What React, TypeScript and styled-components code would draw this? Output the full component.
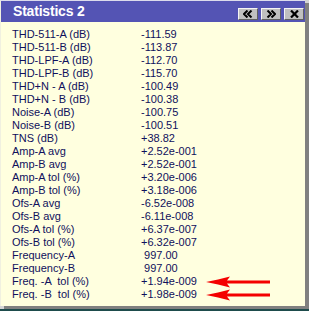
import styled, { createGlobalStyle } from "styled-components"

const GlobalStyle = createGlobalStyle`
  html, body {
    margin: 0;
    padding: 0;
    background: #1e4c4c;
  }
`

const Desktop = styled.div`
  width: 309px;
  height: 309px;
  background: #d4d4d4;
`

const Window = styled.div`
  width: 305px;
  height: 306px;
  box-sizing: border-box;
  border-top: 1px solid #dcdcec;
  border-left: 1px solid #f0f0e0;
  background: #ffffdf;
  box-shadow: 4px 3px 0 #808080;
  display: flex;
  flex-direction: column;
  font-family: "Liberation Sans", Arial, sans-serif;
`

const TitleBar = styled.div`
  height: 21px;
  background: #5454b4;
  display: flex;
  align-items: flex-end;
  padding: 0 1px 2px 12px;
  box-sizing: border-box;
`

const Title = styled.div`
  flex: 1;
  align-self: center;
  color: #fff;
  font-weight: bold;
  font-size: 14px;
  letter-spacing: -0.2px;
  margin-top: 1px;
`

const Buttons = styled.div`
  display: flex;
  gap: 3px;
`

const TitleButton = styled.button`
  width: 20px;
  height: 12px;
  padding: 0;
  margin: 0;
  background: #c0c0c0;
  border: 1px solid;
  border-color: #f4f4f4 #606060 #606060 #f4f4f4;
  display: flex;
  align-items: center;
  justify-content: center;
`

const Body = styled.div`
  padding: 6px 0 0 11px;
  color: #10105c;
  font-size: 11px;
  line-height: 13px;
`

const Row = styled.div`
  display: grid;
  grid-template-columns: 129px 65px 66px;
  height: 13px;
  align-items: center;
`

const Value = styled.span`
  white-space: pre;
`

const LeftIcon = () => (
  <svg width="10" height="8" viewBox="0 0 10 8">
    <path d="M4.5 0.5 L1 4 L4.5 7.5 M8.5 0.5 L5 4 L8.5 7.5" fill="none" stroke="#000" strokeWidth="2" />
  </svg>
)

const RightIcon = () => (
  <svg width="10" height="8" viewBox="0 0 10 8">
    <path d="M1.5 0.5 L5 4 L1.5 7.5 M5.5 0.5 L9 4 L5.5 7.5" fill="none" stroke="#000" strokeWidth="2" />
  </svg>
)

const CloseIcon = () => (
  <svg width="9" height="8" viewBox="0 0 9 8">
    <path d="M1 0.5 L8 7.5 M8 0.5 L1 7.5" fill="none" stroke="#000" strokeWidth="2.2" />
  </svg>
)

const Arrow = () => (
  <svg width="66" height="12" viewBox="0 0 66 12">
    <path
      d="M0 6 C8 4.5 16 2.5 24 0.5 L21 4.6 L64 4.6 L64 7.4 L21 7.4 L24 11.5 C16 9.5 8 7.5 0 6 Z"
      fill="#f40000"
    />
  </svg>
)

const stats: [string, string, boolean?][] = [
  ["THD-511-A (dB)", "-111.59"],
  ["THD-511-B (dB)", "-113.87"],
  ["THD-LPF-A (dB)", "-112.70"],
  ["THD-LPF-B (dB)", "-115.70"],
  ["THD+N - A (dB)", "-100.49"],
  ["THD+N - B (dB)", "-100.38"],
  ["Noise-A (dB)", "-100.75"],
  ["Noise-B (dB)", "-100.51"],
  ["TNS (dB)", "+38.82"],
  ["Amp-A avg", "+2.52e-001"],
  ["Amp-B avg", "+2.52e-001"],
  ["Amp-A tol (%)", "+3.20e-006"],
  ["Amp-B tol (%)", "+3.18e-006"],
  ["Ofs-A avg", "-6.52e-008"],
  ["Ofs-B avg", "-6.11e-008"],
  ["Ofs-A tol (%)", "+6.37e-007"],
  ["Ofs-B tol (%)", "+6.32e-007"],
  ["Frequency-A", " 997.00"],
  ["Frequency-B", " 997.00"],
  ["Freq. -A  tol (%)", "+1.94e-009", true],
  ["Freq. -B  tol (%)", "+1.98e-009", true],
]

const App = () => (
  <>
    <GlobalStyle />
    <Desktop>
      <Window>
        <TitleBar>
          <Title>Statistics 2</Title>
          <Buttons>
            <TitleButton type="button"><LeftIcon /></TitleButton>
            <TitleButton type="button"><RightIcon /></TitleButton>
            <TitleButton type="button"><CloseIcon /></TitleButton>
          </Buttons>
        </TitleBar>
        <Body>
          {stats.map(([label, value, marked]) => (
            <Row key={label}>
              <Value>{label}</Value>
              <Value>{value}</Value>
              {marked ? <Arrow /> : <span />}
            </Row>
          ))}
        </Body>
      </Window>
    </Desktop>
  </>
)

export default App
